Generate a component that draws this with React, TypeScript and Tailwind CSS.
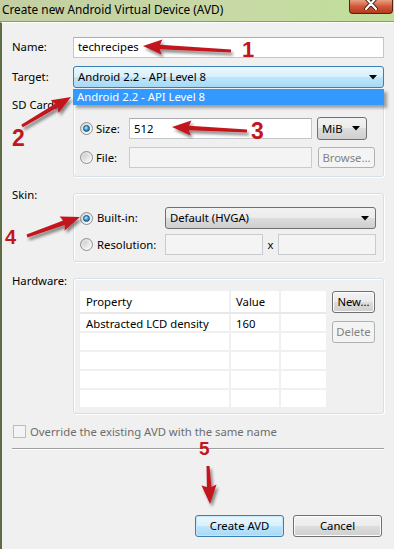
import React from 'react';

type Pt = [number, number];

const ARROWS: { from: Pt; to: Pt }[] = [
  { from: [231, 51], to: [143, 46] },
  { from: [22, 126], to: [71, 97] },
  { from: [247, 131], to: [172, 127] },
  { from: [27, 236], to: [80, 217] },
  { from: [208, 466], to: [210, 504] },
];

function arrowPoints(from: Pt, to: Pt, w = 4.5, hl = 17, hw = 15) {
  const [x1, y1] = from;
  const [x2, y2] = to;
  const len = Math.hypot(x2 - x1, y2 - y1);
  const ux = (x2 - x1) / len;
  const uy = (y2 - y1) / len;
  const px = -uy;
  const py = ux;
  const bx = x2 - ux * hl;
  const by = y2 - uy * hl;
  const pts: Pt[] = [
    [x1 + (px * w) / 3, y1 + (py * w) / 3],
    [bx + (px * w) / 2, by + (py * w) / 2],
    [bx - ux * 2 + (px * hw) / 2, by - uy * 2 + (py * hw) / 2],
    [x2, y2],
    [bx - ux * 2 - (px * hw) / 2, by - uy * 2 - (py * hw) / 2],
    [bx - (px * w) / 2, by - (py * w) / 2],
    [x1 - (px * w) / 3, y1 - (py * w) / 3],
  ];
  return pts.map((p) => `${p[0].toFixed(1)},${p[1].toFixed(1)}`).join(' ');
}

function Radio({ checked }: { checked?: boolean }) {
  return (
    <span className="w-[13px] h-[13px] rounded-full border border-[#8e8f8f] bg-[linear-gradient(135deg,#d4d4d4,#ffffff)] flex items-center justify-center shrink-0">
      {checked ? (
        <span className="w-[7px] h-[7px] rounded-full border border-[#1b4e74] bg-[radial-gradient(circle_at_40%_35%,#c4edff_0%,#3ea4dc_45%,#0c4f80_100%)]" />
      ) : (
        <span className="w-[7px] h-[7px] rounded-full bg-[linear-gradient(135deg,#cccccc,#f6f6f6)]" />
      )}
    </span>
  );
}

function TextBox({ value, disabled, className = '' }: { value?: string; disabled?: boolean; className?: string }) {
  return (
    <div
      className={`h-[21px] border flex items-center px-[4px] ${
        disabled ? 'bg-[#f4f4f4] border-[#c9cbce]' : 'bg-white border-[#c3c7cc] border-t-[#abadb3]'
      } ${className}`}
    >
      {value}
    </div>
  );
}

function Caret() {
  return (
    <svg width="8" height="5" viewBox="0 0 8 5" className="shrink-0">
      <path d="M0 0 H8 L4 4.5 Z" fill="#000" />
    </svg>
  );
}

function Combo({ value, hot, className = '' }: { value: string; hot?: boolean; className?: string }) {
  return (
    <div
      className={`flex items-center justify-between pl-[4px] pr-[6px] border rounded-[3px] ${
        hot
          ? 'border-[#3c7fb1] bg-[linear-gradient(to_bottom,#eaf6fd_0%,#d9f0fc_50%,#bee6fd_50%,#a7d9f5_100%)]'
          : 'border-[#707070] bg-[linear-gradient(to_bottom,#f2f2f2_0%,#ebebeb_50%,#dddddd_50%,#cfcfcf_100%)]'
      } ${className}`}
    >
      <span>{value}</span>
      <Caret />
    </div>
  );
}

function WinButton({
  label,
  variant = 'normal',
  className = '',
}: {
  label: string;
  variant?: 'normal' | 'default' | 'disabled';
  className?: string;
}) {
  const look =
    variant === 'default'
      ? 'border-[#3c7fb1] bg-[linear-gradient(to_bottom,#eaf6fd_0%,#d9f0fc_50%,#bee6fd_50%,#a7d9f5_100%)] shadow-[inset_0_0_0_1px_#c6e6f8]'
      : variant === 'disabled'
      ? 'border-[#adb2b5] bg-[#f4f4f4] text-[#838383]'
      : 'border-[#707070] bg-[linear-gradient(to_bottom,#f2f2f2_0%,#ebebeb_50%,#dddddd_50%,#cfcfcf_100%)] shadow-[inset_0_0_0_1px_#fcfcfc]';
  return (
    <div className={`flex items-center justify-center border rounded-[3px] ${look} ${className}`}>{label}</div>
  );
}

function Group({ children, className = '' }: { children: React.ReactNode; className?: string }) {
  return (
    <div
      className={`flex-1 mt-[7px] border border-[#d5dfe5] rounded-[3px] shadow-[inset_1px_1px_0_#ffffff,1px_1px_0_#ffffff] ${className}`}
    >
      {children}
    </div>
  );
}

const ROWS = [
  ['Abstracted LCD density', '160'],
  ['', ''],
  ['', ''],
  ['', ''],
  ['', ''],
];

export default function App() {
  return (
    <div className="relative w-[394px] h-[549px] overflow-hidden bg-[#f0f0f0] text-[11.3px] leading-[16px] text-black font-['Noto_Sans',sans-serif]">
      {/* title bar */}
      <div className="h-[22px] flex justify-between border-b border-[#8a9970] bg-[linear-gradient(to_right,#c3cfa2_0%,#c8d9a6_60%,#bfdf98_100%)]">
        <span className="pl-[2px] pt-[1px] text-[11.8px] leading-[16px]">Create new Android Virtual Device (AVD)</span>
        <div className="w-[44px] h-[14px] mr-[1px] rounded-b-[4px] border border-t-0 border-[#5b2014] bg-[linear-gradient(to_bottom,#e9a080_0%,#d0583a_50%,#b73a1e_100%)] flex items-start justify-center">
          <svg width="14" height="10" viewBox="0 0 14 10">
            <path d="M2 -2 L12 9 M12 -2 L2 9" stroke="#3a1a10" strokeWidth="4" strokeLinecap="round" />
            <path d="M2 -2 L12 9 M12 -2 L2 9" stroke="#ffffff" strokeWidth="2.2" strokeLinecap="round" />
          </svg>
        </div>
      </div>

      {/* client area */}
      <div className="h-[527px] border-l-2 border-l-[#5e6c45] border-t border-t-white pl-[10px] pr-[10px] pt-[14px]">
        <div className="flex items-center h-[20px]">
          <div className="w-[61px] shrink-0">Name:</div>
          <TextBox value="techrecipes" className="flex-1 h-[20px]" />
        </div>

        <div className="flex items-center h-[22px] mt-[9px]">
          <div className="w-[61px] shrink-0">Target:</div>
          <div className="flex-1 h-[22px] relative">
            <Combo value="Android 2.2 - API Level 8" hot className="h-[22px]" />
            <div className="absolute left-0 right-0 top-[23px] h-[16px] bg-[#3399ff] text-white pl-[4px] leading-[16px] shadow-[3px_3px_3px_rgba(0,0,0,0.35)] z-10">
              Android 2.2 - API Level 8
            </div>
          </div>
        </div>

        {/* SD card */}
        <div className="flex items-start mt-[8px]">
          <div className="w-[61px] shrink-0 pt-[1px]">SD Card:</div>
          <Group className="pt-[13px] pb-[8px] pl-[6px]">
            <div className="flex items-center h-[23px]">
              <div className="w-[49px] flex items-center gap-[3px]">
                <Radio checked />
                <span>Size:</span>
              </div>
              <TextBox value="512" className="w-[183px]" />
              <Combo value="MiB" className="w-[50px] h-[23px] ml-[5px]" />
            </div>
            <div className="flex items-center h-[21px] mt-[7px]">
              <div className="w-[49px] flex items-center gap-[3px]">
                <Radio />
                <span>File:</span>
              </div>
              <TextBox disabled className="w-[183px]" />
              <WinButton label="Browse..." variant="disabled" className="w-[57px] h-[21px] ml-[6px]" />
            </div>
          </Group>
        </div>

        {/* Skin */}
        <div className="flex items-start mt-[9px]">
          <div className="w-[61px] shrink-0 pt-[1px]">Skin:</div>
          <Group className="pt-[13px] pb-[6px] pl-[6px] pr-[7px]">
            <div className="flex items-center h-[22px]">
              <div className="w-[85px] flex items-center gap-[4px]">
                <Radio checked />
                <span>Built-in:</span>
              </div>
              <Combo value="Default (HVGA)" className="flex-1 h-[22px]" />
            </div>
            <div className="flex items-center h-[21px] mt-[5px]">
              <div className="w-[85px] flex items-center gap-[4px]">
                <Radio />
                <span>Resolution:</span>
              </div>
              <TextBox disabled className="w-[98px]" />
              <span className="w-[15px] text-center">x</span>
              <TextBox disabled className="flex-1" />
            </div>
          </Group>
        </div>

        {/* Hardware */}
        <div className="flex items-start mt-[9px]">
          <div className="w-[61px] shrink-0 pt-[2px]">Hardware:</div>
          <Group className="pt-[12px] pb-[5px] pl-[6px] pr-[8px] flex">
            <div className="w-[246px] h-[117px] bg-white overflow-hidden flex flex-col shrink-0">
              <div className="flex h-[23px] shrink-0 border-b-2 border-[#e8e8e8]">
                <div className="w-[151px] border-r-2 border-[#f0f0f0] pl-[6px] pt-[1px] flex items-center">Property</div>
                <div className="w-[50px] border-r-2 border-[#f0f0f0] pl-[5px] pt-[1px] flex items-center">Value</div>
                <div className="flex-1" />
              </div>
              {ROWS.map((r, i) => (
                <div key={i} className="flex h-[19px] shrink-0 border-b-2 border-[#f0f0f0]">
                  <div className="w-[151px] border-r-2 border-[#f0f0f0] pl-[6px] pt-[2px] flex items-center">{r[0]}</div>
                  <div className="w-[50px] border-r-2 border-[#f0f0f0] pl-[5px] pt-[2px] flex items-center">{r[1]}</div>
                  <div className="flex-1" />
                </div>
              ))}
            </div>
            <div className="ml-[6px] w-[43px] flex flex-col gap-[8px]">
              <WinButton label="New..." className="h-[22px]" />
              <WinButton label="Delete" variant="disabled" className="h-[22px]" />
            </div>
          </Group>
        </div>

        <div className="flex items-center h-[13px] mt-[11px]">
          <span className="w-[13px] h-[13px] ml-[1px] border border-[#bcbcbc] bg-[#f4f4f4] shrink-0" />
          <span className="ml-[4px] text-[#6d6d6d] leading-[13px]">Override the existing AVD with the same name</span>
        </div>

        <div className="mt-[10px] border-t border-t-[#a0a0a0] border-b border-b-white" />

        <div className="mt-[65px] flex justify-end gap-[9px] pr-[2px]">
          <WinButton label="Create AVD" variant="default" className="w-[89px] h-[22px]" />
          <WinButton label="Cancel" className="w-[89px] h-[22px]" />
        </div>
      </div>

      {/* red annotations */}
      <svg className="absolute inset-0 pointer-events-none z-20" width="394" height="549" viewBox="0 0 394 549">
        <defs>
          <filter id="sh" x="-20%" y="-20%" width="140%" height="140%">
            <feDropShadow dx="2" dy="3" stdDeviation="1.8" floodColor="#000" floodOpacity="0.45" />
          </filter>
        </defs>
        {ARROWS.map((a, i) => (
          <polygon key={i} points={arrowPoints(a.from, a.to)} fill="#c3161c" filter="url(#sh)" />
        ))}
      </svg>
      <span className="absolute left-[242px] top-[39px] text-[22px] leading-[22px] font-bold text-[#c3161c] font-['Liberation_Sans',Arial,sans-serif] z-20">1</span>
      <span className="absolute left-[12px] top-[127px] text-[23px] leading-[23px] font-bold text-[#c3161c] font-['Liberation_Sans',Arial,sans-serif] z-20">2</span>
      <span className="absolute left-[251px] top-[120px] text-[23px] leading-[23px] font-bold text-[#c3161c] font-['Liberation_Sans',Arial,sans-serif] z-20">3</span>
      <span className="absolute left-[5px] top-[227px] text-[20px] leading-[20px] font-bold text-[#c3161c] font-['Liberation_Sans',Arial,sans-serif] z-20">4</span>
      <span className="absolute left-[199px] top-[439px] text-[19px] leading-[19px] font-bold text-[#c3161c] font-['Liberation_Sans',Arial,sans-serif] z-20">5</span>
    </div>
  );
}
